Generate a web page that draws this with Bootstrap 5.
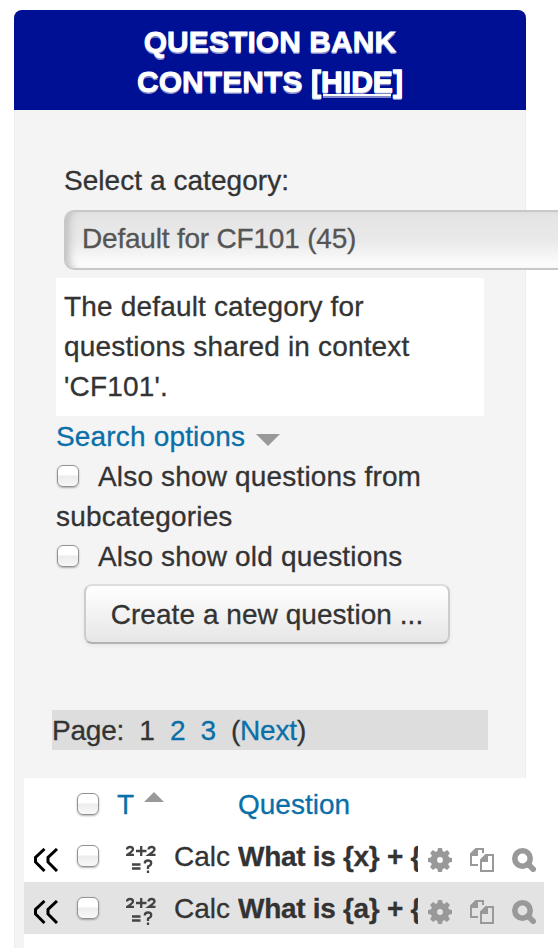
<!DOCTYPE html>
<html lang="en">
<head>
<meta charset="utf-8">
<meta name="viewport" content="width=device-width, initial-scale=1">
<title>Question bank contents</title>
<link href="https://cdn.jsdelivr.net/npm/bootstrap@5.3.0/dist/css/bootstrap.min.css" rel="stylesheet">
<style>
body { font: 28px/40px "Liberation Sans", Arial, sans-serif; color: #333; background: #fff; height: 948px; -webkit-text-stroke: .3px; }
a { color: #0a6fa8; text-decoration: none; }
.bank { width: 512px; height: 938px; margin: 10px 0 0 14px; background: #f4f4f4; border-radius: 8px 8px 0 0; box-shadow: inset 1px 0 #eee, inset -1px 0 #eee; }
.bank-title { height: 100px; font-size: 30px; line-height: 40px; padding: 12px 0 8px; background: #001094; color: #fff; border-radius: 8px 8px 0 0; text-shadow: 0 2px 0 rgba(255,255,255,.5); letter-spacing: .07px; -webkit-text-stroke: .8px; }
.bank-title a { color: #fff; text-decoration: underline; text-decoration-thickness: 2px; text-underline-offset: 2px; }
.bank-body { padding: 51px 42px 0; letter-spacing: .17px; }
.select-label { letter-spacing: .05px; }
.category { width: 494px; height: 60px; line-height: 40px; letter-spacing: -.2px; padding: 7px 16px 9px; margin: 9px 0 8px 8px; color: #555; border: 2px solid #c8c8c8; border-right: 0; border-radius: 10px 0 0 10px; background: linear-gradient(#e4e4e4, #e9e9e9 50%, #fff); box-shadow: inset 8px 0 8px -5px #bbb; }
.category-info { height: 138px; padding: 9px 8px; margin-bottom: 1px; }
.tick { appearance: none; flex: none; display: inline-block; width: 22px; height: 22px; margin: 0; border: 1.5px solid #929292; border-radius: 6px; background: linear-gradient(#fff 45%, #ececec 50%, #f8f8f8); box-shadow: 0 1px 2px rgba(0,0,0,.3); vertical-align: -1px; }
.option-tick { margin: 0 19px 0 1px; }
.arrow-down { display: inline-block; margin-left: 11px; border: 12px solid transparent; border-top-color: #999; border-bottom: 0; vertical-align: 0; }
.create { width: 366px; height: 60px; margin: 7px 0 0 28px; padding: 9px 0 7px; font-size: 28px; line-height: 40px; color: #333; letter-spacing: .05px; border: 2px solid #ccc; border-top-color: #ddd; border-bottom-color: #b3b3b3; border-radius: 8px; background: linear-gradient(#fff, #e6e6e6); box-shadow: 0 2px 4px rgba(0,0,0,.05); }
.pager { width: 436px; height: 40px; padding-top: 1px; margin: 66px 0 28px -4px; background: #ddd; white-space: pre; letter-spacing: -.2px; }
.questions { width: 520px; height: 170px; margin-left: 10px; }
.question-row { display: grid; grid-template-columns: 53px 40px 57px 64px 180px 1fr; height: 52px; align-items: center; }
.question-row > span, .question-row > b, .question-row a { padding-top: 1px; }
.question-row b { letter-spacing: -.3px; overflow: hidden; }
.question-row.shaded { background: #e3e3e3; }
.question-row svg { display: block; }
.back-arrows { margin: 8px 0 0 9px; }
.sum-icon { margin: 8px 0 0 9px; }
.sort-up { border: 10px solid transparent; border-bottom-color: #999; border-top: 0; margin: -14px 0 0 10px; }
.actions { gap: 18px; padding: 8px 0 0 10px; }
</style>
<script src="https://cdn.jsdelivr.net/npm/bootstrap@5.3.0/dist/js/bootstrap.bundle.min.js"></script>
</head>
<body class="overflow-hidden">
<svg width="0" height="0" class="position-absolute">
  <defs>
    <symbol id="back" viewBox="0 0 24 24"><path d="M10.500 1 1.500 9.500v4.500l9 9M23 1l-9 8.500v4.500l9 9" fill="none" stroke="#000" stroke-width="3"/></symbol>
    <symbol id="sum" viewBox="0 0 32 30"><g fill="none" stroke="#444" stroke-width="2.300"><path d="M1 4.500Q1 2 4 2T7 4.500Q7 6 1.500 9.800H8M22.500 4.500q0-2.500 3-2.500t3 2.500q0 1.500-5.500 5.300h6.500M10 6h10.500M15.200 1v10M6 19.500h8.500M6 23.500h8.500M18.800 18.500q0-3 3.200-3t3.200 2.500-3.200 3.500V24M22 25.500V28"/></g></symbol>
    <symbol id="gear" viewBox="0 0 24 24"><g fill="#999"><path id="teeth" d="M10 0h4l1.300 6H8.700zM10 24h4l1.300-6H8.700zM0 10v4l6 1.300V8.700zM24 10v4l-6 1.300V8.700z"/><use href="#teeth" transform="rotate(45 12 12)"/></g><circle cx="12" cy="12" r="6.100" fill="none" stroke="#999" stroke-width="6.400"/></symbol>
    <symbol id="copy" viewBox="0 0 24 24"><path d="M8 17H1V6l5-5h7v4" fill="none" stroke="#999" stroke-width="2"/><path d="M0 6 6 0h2v8H0zM10 12l6-6h2v8h-8z" fill="#999"/><path d="M11 23V12l5-5h7v16z" fill="none" stroke="#999" stroke-width="2"/></symbol>
    <symbol id="zoom" viewBox="0 0 24 24"><circle cx="10.500" cy="10.500" r="7.700" fill="none" stroke="#999" stroke-width="5.600"/><path d="m16 16 5.200 5.200" stroke="#999" stroke-width="5.600" stroke-linecap="round"/></symbol>
  </defs>
</svg>
<main class="bank">
  <h2 class="bank-title text-center fw-bold mb-0">QUESTION BANK<br>CONTENTS <a href="#">[HIDE]</a></h2>
  <div class="bank-body">
    <div class="select-label ps-2">Select a category:</div>
    <div class="category">Default for CF101 (45)</div>
    <div class="category-info bg-white">The default category for questions shared in context 'CF101'.</div>
    <div><a href="#">Search options</a><span class="arrow-down"></span></div>
    <label class="d-block"><input type="checkbox" class="tick option-tick">Also show questions from subcategories</label>
    <label class="d-block"><input type="checkbox" class="tick option-tick">Also show old questions</label>
    <button type="button" class="create d-block">Create a new question ...</button>
    <nav class="pager">Page:  1  <a href="#">2</a>  <a href="#">3</a>  (<a href="#">Next</a>)</nav>
  </div>
  <section class="questions bg-white">
    <div class="question-row">
      <span></span><input type="checkbox" class="tick">
      <div class="d-flex align-items-center"><a href="#">T</a><span class="sort-up"></span></div>
      <span></span><a href="#">Question</a>
    </div>
    <div class="question-row">
      <svg class="back-arrows" width="26" height="24"><use href="#back"/></svg>
      <input type="checkbox" class="tick">
      <svg class="sum-icon" width="32" height="30"><use href="#sum"/></svg>
      <span>Calc</span><b class="text-nowrap">What is {x} + {</b>
      <div class="actions d-flex"><svg width="24" height="24"><use href="#gear"/></svg><svg width="24" height="24"><use href="#copy"/></svg><svg width="24" height="24"><use href="#zoom"/></svg></div>
    </div>
    <div class="question-row shaded">
      <svg class="back-arrows" width="26" height="24"><use href="#back"/></svg>
      <input type="checkbox" class="tick">
      <svg class="sum-icon" width="32" height="30"><use href="#sum"/></svg>
      <span>Calc</span><b class="text-nowrap">What is {a} + {</b>
      <div class="actions d-flex"><svg width="24" height="24"><use href="#gear"/></svg><svg width="24" height="24"><use href="#copy"/></svg><svg width="24" height="24"><use href="#zoom"/></svg></div>
    </div>
  </section>
</main>
</body>
</html>
